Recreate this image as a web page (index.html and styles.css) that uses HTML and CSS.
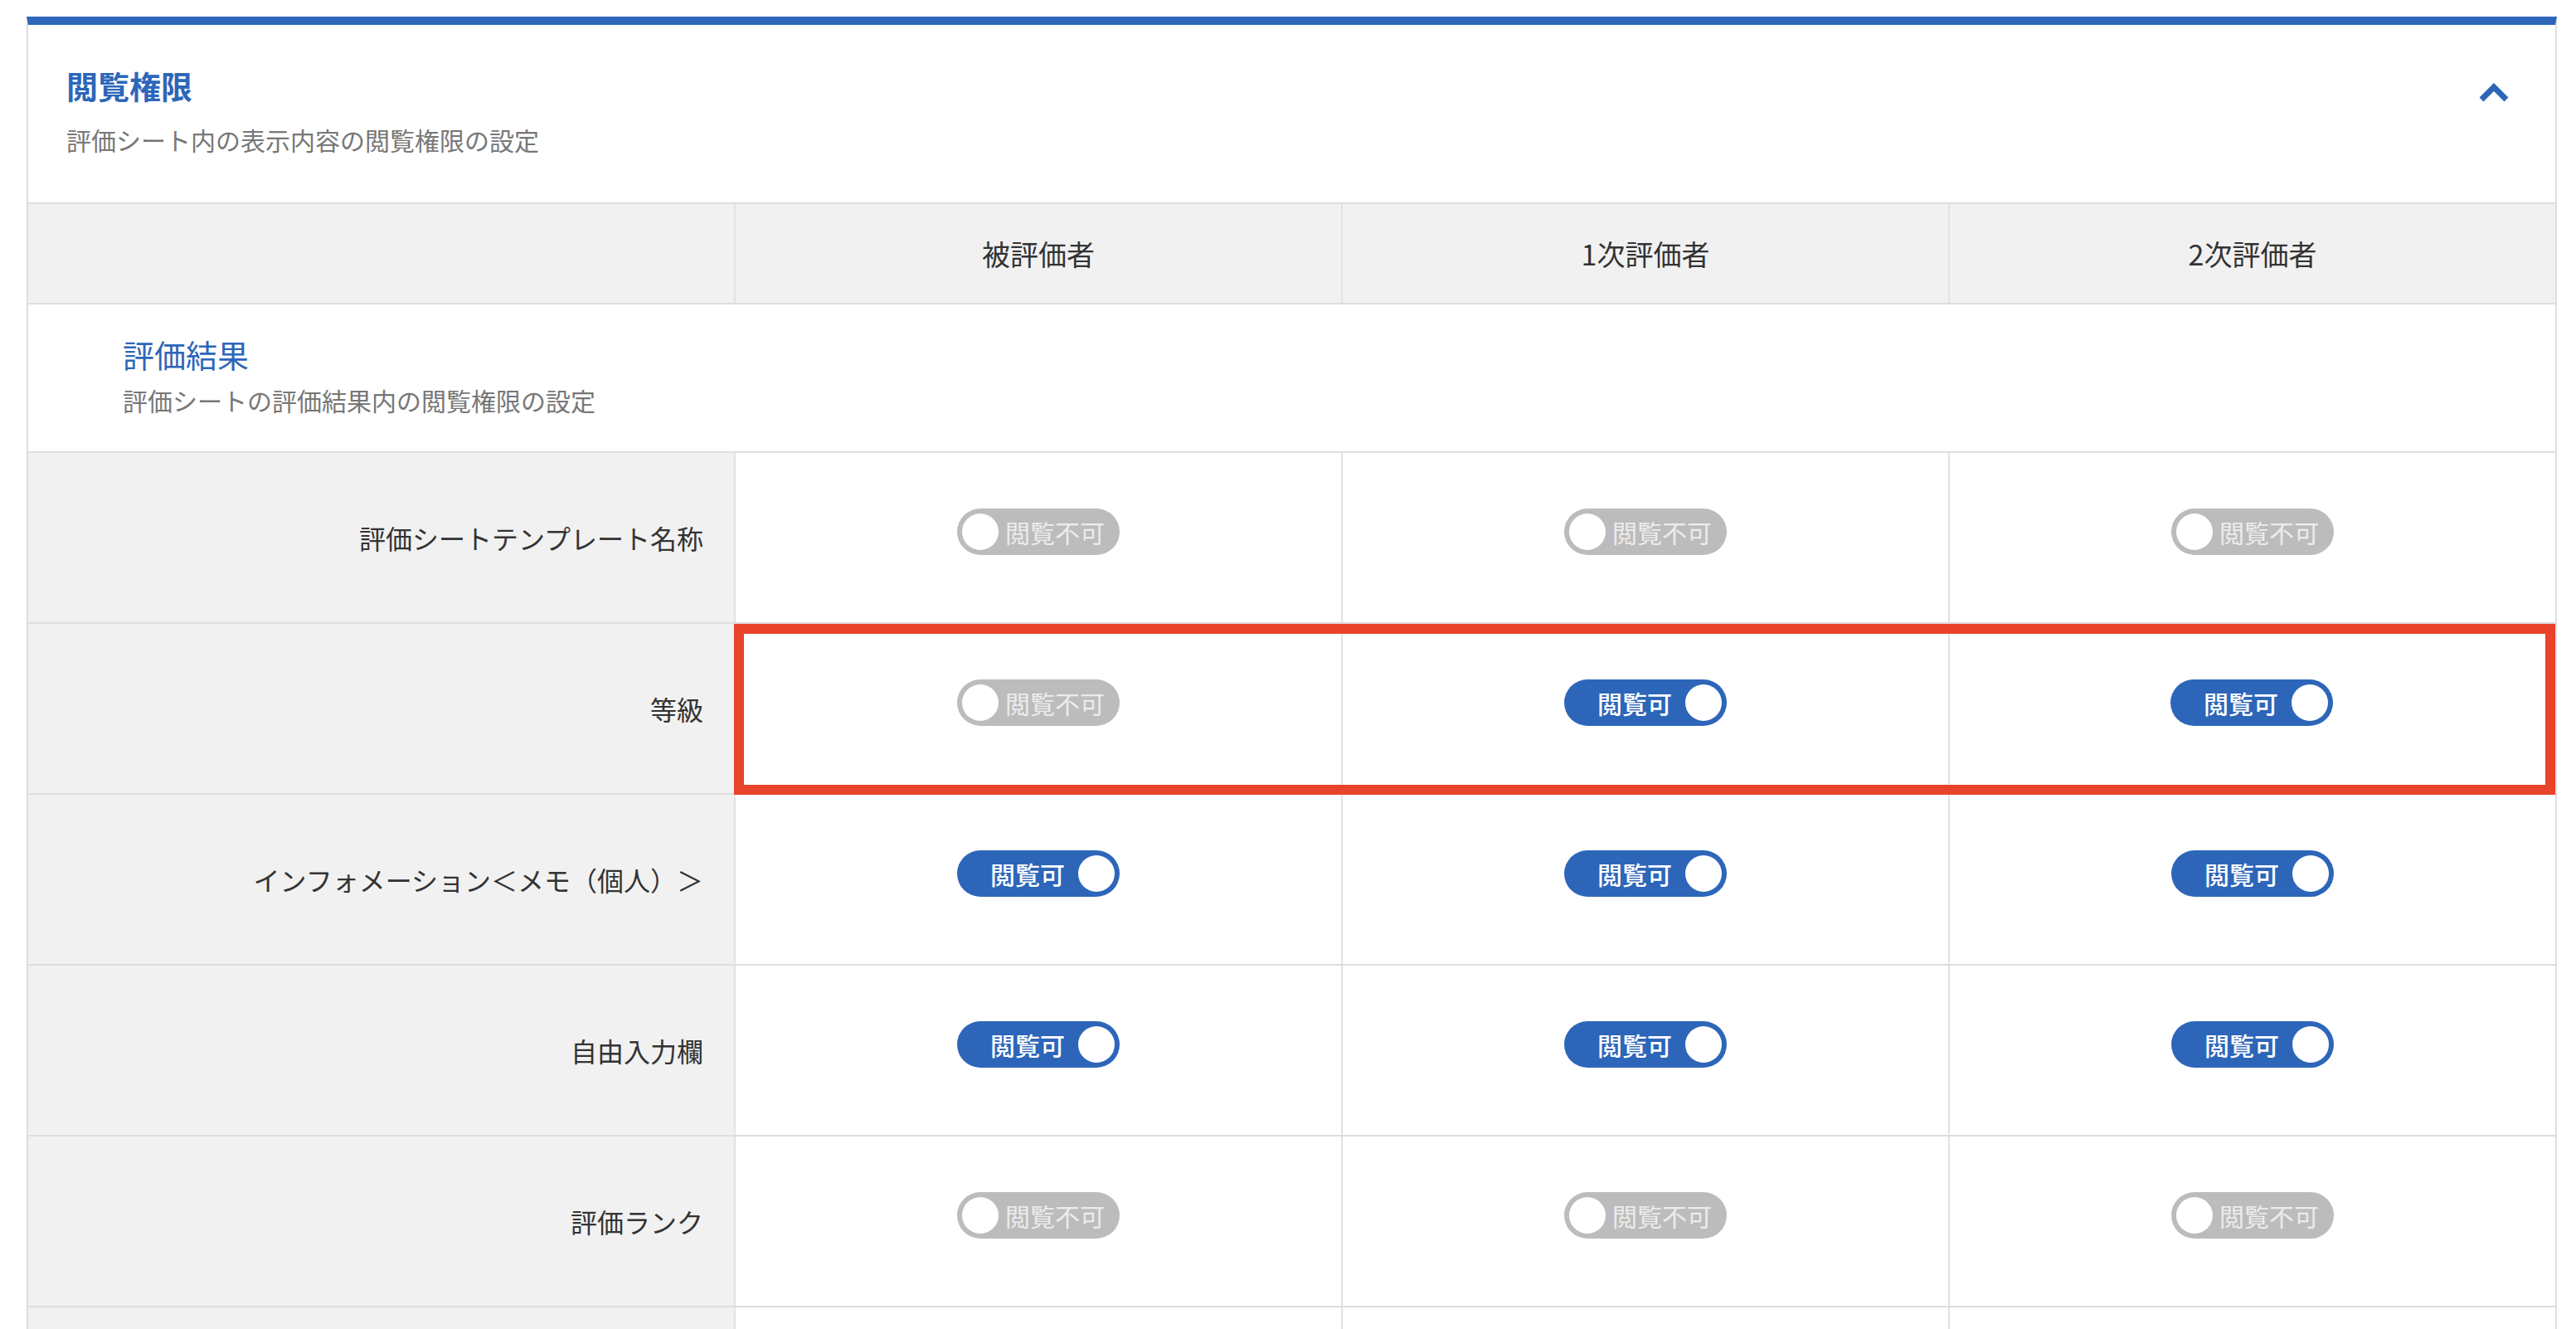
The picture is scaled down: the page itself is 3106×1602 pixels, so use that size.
FILE: index.html
```html
<!DOCTYPE html>
<html lang="ja">
<head>
  <meta charset="UTF-8" />
  <title>閲覧権限</title>
  <link rel="stylesheet" href="styles.css">
</head>
<body>
  <div class="card">
    <div class="card-head">
      <div>
        <div class="card-title">閲覧権限</div>
        <div class="card-desc">評価シート内の表示内容の閲覧権限の設定</div>
      </div>
      <svg class="chevron" width="40" height="28" viewBox="0 0 40 28">
        <polyline points="5,22 20,7 35,22" fill="none" stroke="#2d66b9" stroke-width="7" stroke-linejoin="miter" />
      </svg>
    </div>

    <div class="row head-row">
      <div class="cell"></div>
      <div class="cell">被評価者</div>
      <div class="cell">1次評価者</div>
      <div class="cell">2次評価者</div>
    </div>

    <div class="section">
      <div class="section-title">評価結果</div>
      <div class="section-desc">評価シートの評価結果内の閲覧権限の設定</div>
    </div>

    <div class="row">
      <div class="cell label">評価シートテンプレート名称</div>
      <div class="cell"><div class="toggle off"><span class="knob"></span><span class="toggle-text">閲覧不可</span></div></div>
      <div class="cell"><div class="toggle off"><span class="knob"></span><span class="toggle-text">閲覧不可</span></div></div>
      <div class="cell"><div class="toggle off"><span class="knob"></span><span class="toggle-text">閲覧不可</span></div></div>
    </div>

    <div class="row marked">
      <div class="cell label">等級</div>
      <div class="cell"><div class="toggle off"><span class="knob"></span><span class="toggle-text">閲覧不可</span></div></div>
      <div class="cell"><div class="toggle on"><span class="toggle-text">閲覧可</span><span class="knob"></span></div></div>
      <div class="cell"><div class="toggle on"><span class="toggle-text">閲覧可</span><span class="knob"></span></div></div>
      <div class="highlight"></div>
    </div>

    <div class="row">
      <div class="cell label">インフォメーション＜メモ（個人）＞</div>
      <div class="cell"><div class="toggle on"><span class="toggle-text">閲覧可</span><span class="knob"></span></div></div>
      <div class="cell"><div class="toggle on"><span class="toggle-text">閲覧可</span><span class="knob"></span></div></div>
      <div class="cell"><div class="toggle on"><span class="toggle-text">閲覧可</span><span class="knob"></span></div></div>
    </div>

    <div class="row">
      <div class="cell label">自由入力欄</div>
      <div class="cell"><div class="toggle on"><span class="toggle-text">閲覧可</span><span class="knob"></span></div></div>
      <div class="cell"><div class="toggle on"><span class="toggle-text">閲覧可</span><span class="knob"></span></div></div>
      <div class="cell"><div class="toggle on"><span class="toggle-text">閲覧可</span><span class="knob"></span></div></div>
    </div>

    <div class="row">
      <div class="cell label">評価ランク</div>
      <div class="cell"><div class="toggle off"><span class="knob"></span><span class="toggle-text">閲覧不可</span></div></div>
      <div class="cell"><div class="toggle off"><span class="knob"></span><span class="toggle-text">閲覧不可</span></div></div>
      <div class="cell"><div class="toggle off"><span class="knob"></span><span class="toggle-text">閲覧不可</span></div></div>
    </div>

    <div class="row">
      <div class="cell label split">
        <div class="sub-cell"></div>
        <div class="sub-cell"></div>
      </div>
      <div class="cell"></div>
      <div class="cell"></div>
      <div class="cell"></div>
    </div>
  </div>
</body>
</html>
```

FILE: styles.css
```css
html, body {
  margin: 0;
  height: 100%;
  overflow: hidden;
}
body {
  font-family: "Noto Sans CJK JP", "Noto Sans", sans-serif;
  background: #fff;
  color: #333;
}
.card {
  margin: 20px 23px 0 32px;
  border-top: 10px solid #2d66b9;
  border-left: 2px solid #dedede;
  border-right: 2px solid #dedede;
  background: #fff;
}
.card-head {
  display: flex;
  justify-content: space-between;
  align-items: flex-start;
  padding: 47px 54px 55px 46px;
  border-bottom: 2px solid #dedede;
}
.card-title {
  font-size: 38px;
  line-height: 52px;
  font-weight: 700;
  color: #2d66b9;
}
.card-desc {
  margin-top: 18px;
  font-size: 30px;
  line-height: 42px;
  color: #777;
}
.chevron {
  margin-top: 21px;
  display: block;
}

/* table rows */
.row {
  display: grid;
  grid-template-columns: 853px 732px 732px 1fr;
  height: 206px;
  box-sizing: border-box;
  border-bottom: 2px solid #dedede;
}
.cell {
  box-sizing: border-box;
  border-right: 2px solid #e2e2e2;
  display: flex;
  align-items: center;
  justify-content: center;
  padding-bottom: 14px;
}
.cell:last-child {
  border-right: none;
}
.head-row {
  height: 121px;
  background: #f1f1f1;
}
.head-row .cell {
  padding-bottom: 0;
  font-size: 34px;
  color: #333;
}
.label {
  background: #f1f1f1;
  justify-content: flex-end;
  padding: 0 37px 0 0;
  font-size: 32px;
  color: #333;
}
.split {
  padding: 0;
  display: grid;
  grid-template-columns: 303px 1fr;
}
.sub-cell {
  border-right: 2px solid #e2e2e2;
}
.sub-cell:last-child {
  border-right: none;
}

/* section heading */
.section {
  padding: 34px 0 41px 114px;
  border-bottom: 2px solid #dedede;
}
.section-title {
  font-size: 38px;
  line-height: 52px;
  color: #2d66b9;
}
.section-desc {
  margin-top: 8px;
  font-size: 30px;
  line-height: 42px;
  color: #777;
}

/* toggles */
.toggle {
  width: 196px;
  height: 56px;
  border-radius: 28px;
  box-sizing: border-box;
  display: flex;
  align-items: center;
  padding: 0 6px;
}
.toggle .knob {
  width: 44px;
  height: 44px;
  border-radius: 50%;
  background: #fff;
  flex-shrink: 0;
}
.toggle-text {
  font-size: 30px;
  line-height: 1;
  white-space: nowrap;
}
.toggle.off {
  background: #bcbcbc;
  gap: 8px;
}
.toggle.off .toggle-text {
  color: #ececec;
}
.toggle.on {
  background: #2d66b9;
  justify-content: flex-end;
  gap: 16px;
}
.toggle.on .toggle-text {
  color: #fff;
  font-weight: 500;
}

/* red annotation frame */
.marked {
  position: relative;
}
.highlight {
  position: absolute;
  left: 851px;
  right: 0;
  top: 0;
  bottom: -2px;
  border: 12px solid #e9432b;
  pointer-events: none;
}
```
